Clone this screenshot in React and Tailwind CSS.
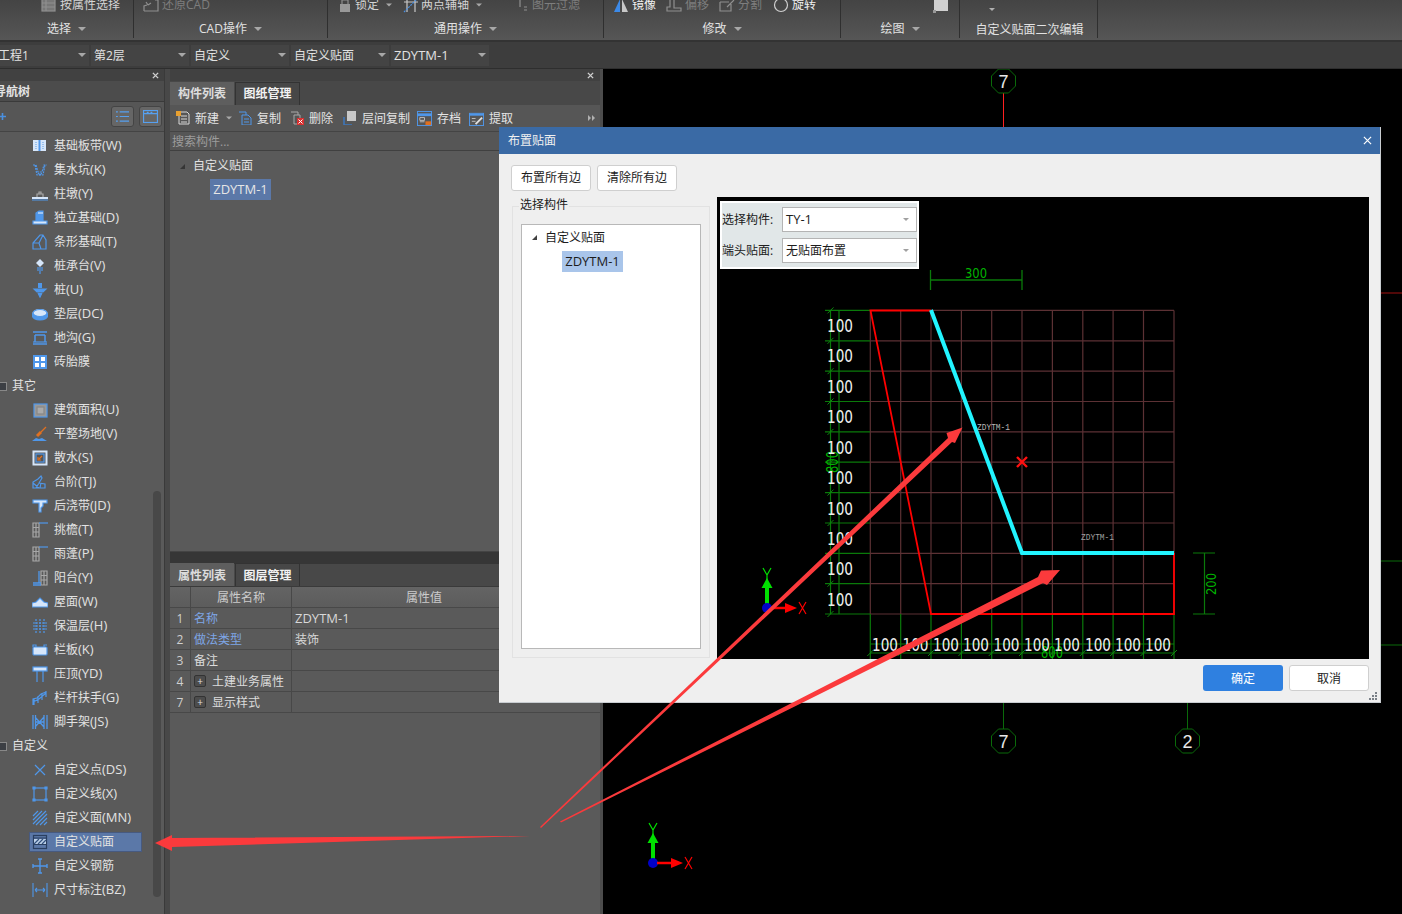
import React from "react";

const B = "#4f97ea";
const L = "#d6e6fa";
const G = "#a8a8a8";
const Svg = ({ children, className = "w-4 h-4" }) => (
  <svg viewBox="0 0 16 16" className={`${className} shrink-0`} fill="none" stroke={B} strokeWidth="1.2">{children}</svg>
);

const icons = {
  band: <><rect x="1" y="2" width="13" height="11" fill={L} stroke="none" /><path d="M7.500 2v11" stroke={B} strokeWidth="2" /><path d="M4 4v7M11 4v7" stroke="#6fa8e8" strokeDasharray="1 1" /></>,
  pit: <><path d="M1 3h3l2 7h4l2-7h3M3 3l2 10h6l2-10" strokeDasharray="2 1" /><path d="M6 11l2 2 2-2" /></>,
  pier: <><path d="M0 12h16" stroke={L} strokeWidth="2" /><path d="M0 14h16" strokeWidth="1" /><path d="M5 11V8h6v3M7 8V6h2v2" stroke={G} /></>,
  found: <><path d="M1 14h14v-3H1z" fill={L} /><path d="M4 11V3l3-2h4v10" fill={B} /><path d="M6 3h5" stroke={L} /></>,
  strip: <path d="M1 15V9l7-8h3l3 5v9zM1 9h6l2 6M7 9l4-8" />,
  cap: <><path d="M8 1l4 4-4 4-4-4z" fill={L} stroke="none" /><path d="M6 9v4M10 9v4M8 9v7" /></>,
  pile: <><rect x="6" y="1" width="4" height="5" fill={B} stroke="none" /><path d="M2 7h12l-3 3H5zM6 11l2 4 2-4" fill={B} /></>,
  cushion: <><ellipse cx="8" cy="7" rx="7.5" ry="4" fill={L} stroke="none" /><path d="M.5 7v3c0 2 3 4 7.5 4s7.5-2 7.5-4V7" fill={B} /><ellipse cx="8" cy="7" rx="7" ry="3.5" fill={L} /></>,
  trench: <><path d="M1 14h14M1 2h14M3 5h10M3 5v7M13 5v7" strokeWidth="1.5" /><path d="M1 12h14" /></>,
  brick: <><rect x="2" y="2" width="12" height="12" fill="#fff" stroke={B} strokeWidth="2" /><path d="M8 2v12M2 8h12" stroke={B} strokeWidth="2" /></>,
  area: <><rect x="2" y="2" width="13" height="13" fill="#999" stroke={B} /><rect x="5" y="5" width="7" height="7" fill="#aaa" stroke="#888" /></>,
  ground: <><path d="M0 15l4-3 3 1 3-1 5 3z" fill={B} stroke="none" /><path d="M5 10l4-4" stroke="#e07020" strokeWidth="3" /><path d="M9 6l5-5" stroke="#e07020" strokeWidth="1.3" /></>,
  apron: <><rect x="1.5" y="1.5" width="13" height="13" stroke={L} strokeWidth="2" /><rect x="4" y="4" width="8" height="8" fill="#555" stroke={B} /><path d="M10 6l-3 3M6 7v3h3" stroke="#e07020" /></>,
  stair: <path d="M1 14V8l5-3 3-3 1 2-3 5 6 1v4zM1 9l6 5M7 9l-3 5M9 9l-1 5" />,
  post: <path d="M1 2h14v3h-4v3l-2 2v4H7V5H1z" fill={L} stroke={B} />,
  eave: <><path d="M1 1h6v14H1zM1 5.5h6M1 10h6M4 1v14" stroke={G} /><path d="M7 1h9" /></>,
  balc: <><path d="M9 1h6v14H9zM9 5.5h6M9 10h6M12 1v14" stroke={G} /><path d="M1 13h8M1 15h8M7 1v12" strokeWidth="1.3" /></>,
  roof: <path d="M0 13V9l4-1 4-4 4 4 4 1v4z" fill={L} stroke={B} />,
  insul: <path d="M4 1v14M12 1v14M8 1v14M1 5h14M1 8h14M1 11h14" strokeDasharray="2 1" />,
  rail: <><rect x="1" y="5" width="14" height="8" rx="1" fill={L} stroke={B} /><path d="M1 5V3h3v2M12 5V3h3" /></>,
  cope: <><rect x="1" y="1" width="14" height="4" fill={L} stroke={B} /><path d="M5 5v11M11 5v11" /></>,
  hand: <path d="M1 15V9l4-1 4-4 5-2M2 9v6M6 6v7M10 3v7M14 1v6M1 12l6-3 7-6" />,
  scaf: <path d="M1 1v14M3.5 1v14M12 1v14M15 1v14M3 3l9 10M3 13l9-10M3 8h9" strokeWidth="1.3" />,
  dot: <path d="M3 3l10 10M13 3L3 13" />,
  line: <><rect x="2" y="2" width="12" height="12" /><path d="M1 1h2v2H1zM13 1h2v2h-2zM1 13h2v2H1zM13 13h2v2h-2z" fill={B} /></>,
  face: <path d="M1 6l5-5M1 10l9-9M1 14L14 1M4 15L15 4M8 15l7-7M12 15l3-3" />,
  tile: <><rect x="1.5" y="1.5" width="13" height="13" stroke="#2a3f60" /><rect x="2" y="5" width="12" height="5" fill="#bcd0e8" stroke="none" /><path d="M2 10l5-5M6 10l5-5M10 10l4-4" stroke="#33527f" /><path d="M1.5 4h13M1.5 10.500h13" stroke="#2a3f60" /></>,
  rebar: <path d="M8 1v14M1 8h14M1 6v4M15 6v4M6 1h4M6 15h4" strokeWidth="1.4" />,
  dim: <path d="M1 1v14M15 1v14M3 8h10M3 8l2-2M3 8l2 2M13 8l-2-2M13 8l-2 2" strokeWidth="1.1" stroke={B} />,
};

const navRows = [
  ["基础板带", "(W)", "band"], ["集水坑", "(K)", "pit"], ["柱墩", "(Y)", "pier"], ["独立基础", "(D)", "found"],
  ["条形基础", "(T)", "strip"], ["桩承台", "(V)", "cap"], ["桩", "(U)", "pile"], ["垫层", "(DC)", "cushion"],
  ["地沟", "(G)", "trench"], ["砖胎膜", "", "brick"], ["其它", "", null],
  ["建筑面积", "(U)", "area"], ["平整场地", "(V)", "ground"], ["散水", "(S)", "apron"], ["台阶", "(TJ)", "stair"],
  ["后浇带", "(JD)", "post"], ["挑檐", "(T)", "eave"], ["雨蓬", "(P)", "eave"], ["阳台", "(Y)", "balc"],
  ["屋面", "(W)", "roof"], ["保温层", "(H)", "insul"], ["栏板", "(K)", "rail"], ["压顶", "(YD)", "cope"],
  ["栏杆扶手", "(G)", "hand"], ["脚手架", "(JS)", "scaf"], ["自定义", "", null],
  ["自定义点", "(DS)", "dot"], ["自定义线", "(X)", "line"], ["自定义面", "(MN)", "face"],
  ["自定义贴面", "", "tile", true], ["自定义钢筋", "", "rebar"], ["尺寸标注", "(BZ)", "dim"],
];

const Caret = ({ className = "" }) => (
  <span className={`inline-block w-0 h-0 border-x-[4px] border-x-transparent border-t-[4px] border-t-[#a8a8a8] ${className}`} />
);

const RibbonGroup = ({ w, label, caret = true, children, labelClass = "" }) => (
  <div className={`${w} h-[38px] shrink-0 border-r border-[#2f2f2f] overflow-hidden flex flex-col`}>
    <div className="h-[16px] -mt-[3px] relative flex items-center whitespace-nowrap">{children}</div>
    <div className={`h-[16px] mt-[8px] flex items-center justify-center gap-[7px] text-[12px] text-[#e2e2e2] ${labelClass}`}>
      {label}{caret && <Caret />}
    </div>
  </div>
);

const RI = ({ ml, children }) => (
  <svg viewBox="0 0 16 16" className={`w-[16px] h-[16px] shrink-0 ${ml}`} fill="none" stroke="#8f8f8f" strokeWidth="1.2">{children}</svg>
);

const Select = ({ w, text, first, latin }) => (
  <div className={`${w} h-[21px] bg-[#444444] flex items-center justify-between pr-[3px] ${first ? "" : "pl-[3px]"} overflow-hidden`}>
    <span className={`pt-[2px] ${latin ? "text-[13px]" : "text-[12px]"} text-[#e2e2e2] whitespace-nowrap ${first ? "-ml-[2px]" : ""}`}>{text}</span>
    <Caret />
  </div>
);

const StripClose = ({ pr }) => (
  <div className={`h-[12px] bg-[#414141] flex items-center justify-end ${pr}`}>
    <svg viewBox="0 0 8 8" className="w-[7px] h-[7px]" stroke="#d0d0d0" strokeWidth="1.6"><path d="M1 1l6 6M7 1L1 7" /></svg>
  </div>
);

const Tab = ({ active, w, low, children }) => (
  <div className={`${w} h-[23px] flex items-center justify-center text-[12px] font-bold ${low ? (active ? "pt-[2px]" : "pt-[1px]") : ""} ${active ? "bg-[#5e5e5e] text-[#dcdcdc]" : "bg-[#474747] text-[#f2f2f2] border-x border-t border-[#333333]"}`}>
    {children}
  </div>
);

const Tb = ({ icon, label, ml, caret }) => (
  <div className={`flex items-center ${ml} shrink-0`}>
    {icon}
    <span className="ml-[5px] pt-[2px] text-[12px] text-[#e4e4e4]">{label}</span>
    {caret && <Caret className="ml-[6px] scale-75" />}
  </div>
);

const PropRow = ({ n, name, value, blue, plus, latin }) => (
  <div className="h-[21px] flex border-b border-[#484848] text-[12px]">
    <div className="w-[21px] shrink-0 border-r border-[#484848] flex items-center justify-center pt-[2px] text-[#d0d0d0]">{n}</div>
    <div className={`w-[101px] shrink-0 border-r border-[#484848] flex items-center pl-[3px] whitespace-nowrap ${blue ? "text-[#7ea6e6]" : "text-[#dcdcdc]"}`}>
      {plus && (
        <span className="w-[12px] h-[12px] mr-[6px] rounded-[2px] border border-[#333333] bg-[#4c4c4c] text-[#e0e0e0] flex items-center justify-center text-[10px] leading-none">+</span>
      )}
      <span className="pt-[2px]">{name}</span>
    </div>
    <div className={`flex-1 flex items-center pl-[3px] pt-[2px] text-[#d8d8d8] ${latin ? "text-[13px]" : ""}`}>{value}</div>
  </div>
);

const gx = [870.3, 900.7, 931, 961.4, 991.7, 1022, 1052.4, 1082.8, 1113.1, 1143.5, 1174];
const gy = [310.4, 340.8, 371.2, 401.5, 431.9, 462.2, 492.6, 523, 553.3, 583.7, 614];

const Num = ({ x, y, children }) => (
  <text x={x} y={y} fill="#f0f0f0" fontSize="17" fontFamily="DejaVu Sans" textLength="26" lengthAdjust="spacingAndGlyphs">{children}</text>
);

const Axis = ({ x, y }) => (
  <g>
    <path d={`M${x} ${y - 4}v-18`} stroke="#00e000" strokeWidth="4" />
    <path d={`M${x - 5.500} ${y - 20}L${x} ${y - 30}L${x + 5.500} ${y - 20}z`} fill="#00e000" />
    <circle cx={x} cy={y} r="5" fill="#0000c8" />
    <path d={`M${x + 4} ${y}h16`} stroke="#ff0000" strokeWidth="2.500" />
    <path d={`M${x + 18} ${y - 5}L${x + 30} ${y}L${x + 18} ${y + 5}z`} fill="#ff0000" />
    <path d={`M${x - 4} ${y - 40}L${x} ${y - 33}L${x + 4} ${y - 40}M${x} ${y - 33}v6`} stroke="#00e000" strokeWidth="1.200" fill="none" />
    <path d={`M${x + 32} ${y - 6}l7 12M${x + 39} ${y - 6}l-7 12`} stroke="#ff0000" strokeWidth="1.200" fill="none" />
  </g>
);

const Octa = ({ x, y, t }) => (
  <g>
    <path d={`M${x - 5} ${y - 12}h10l7 7v10l-7 7h-10l-7-7v-10z`} fill="none" stroke="#0a6a0a" strokeWidth="1" />
    <text x={x} y={y + 7} textAnchor="middle" fill="#e8e8e8" fontSize="18" fontFamily="Liberation Sans">{t}</text>
  </g>
);

function Canvas() {
  return (
    <svg viewBox="603 69 799 845" className="w-full h-full block">
      <path d="M1003.500 93v40" stroke="#ff2020" strokeWidth="1" />
      <path d="M1003.500 700v29M1187.500 700v29" stroke="#0a6a0a" strokeWidth="1" />
      <path d="M1378 293h24" stroke="#a01010" strokeWidth="1" />
      <path d="M1378 561h24M1378 645h24" stroke="#0a6a0a" strokeWidth="1" />
      <Octa x={1003.500} y={81} t="7" />
      <Octa x={1003.500} y={741} t="7" />
      <Octa x={1187.500} y={741} t="2" />
      <Axis x={653} y={863} />
    </svg>
  );
}

function Drawing() {
  const ticks = (x, y, key) => <path key={key} d={`M${x - 3} ${y + 3}l6-6`} stroke="#0d8a0d" strokeWidth="1" />;
  return (
    <svg viewBox="717 197 652 462" className="w-full h-full block">
      {gx.map((x) => <path key={x} d={`M${x} 310.400V614`} stroke="#5c3134" strokeWidth="1.200" />)}
      {gy.map((y) => <path key={y} d={`M870.300 ${y}H1174`} stroke="#5c3134" strokeWidth="1.200" />)}
      <path d="M830.500 310V614M839 310V614" stroke="#0a7a0a" strokeWidth="1.200" />
      <path d="M825 310.400H870M825 340.800H870M825 371.200H870M825 401.500H870M825 431.900H870M825 462.200H870M825 492.600H870M825 523H870M825 553.300H870M825 583.700H870M825 614H870" stroke="#0a7a0a" strokeWidth="1.200" />
      {gy.map((y, i) => ticks(830.5, y, "l" + i))}
      <path d="M870 644H1174M870 653H1174" stroke="#0a7a0a" strokeWidth="1.200" />
      {gx.map((x) => <path key={x} d={`M${x} 614V659`} stroke="#0a7a0a" strokeWidth="1.200" />)}
      {gx.map((x, i) => ticks(x, 653, "b" + i))}
      <text x={1052} y={658} textAnchor="middle" fill="#00b400" fontSize="15" fontFamily="DejaVu Sans" textLength="22" lengthAdjust="spacingAndGlyphs">800</text>
      <text transform="translate(838 462) rotate(-90)" textAnchor="middle" fill="#00b400" fontSize="15" fontFamily="DejaVu Sans" textLength="22" lengthAdjust="spacingAndGlyphs">800</text>
      {[332, 362, 393, 423, 454, 484, 515, 545, 575, 606].map((y) => <Num key={y} x={827} y={y}>100</Num>)}
      {[885, 915.500, 946, 976, 1006.500, 1037, 1067, 1098, 1128, 1158].map((x) => <Num key={x} x={x - 13} y={651}>100</Num>)}
      <path d="M930.500 280H1022M930.500 270V290M1022 270V290" stroke="#0a7a0a" strokeWidth="1.300" />
      <text x={976} y={278} textAnchor="middle" fill="#00b400" fontSize="14" fontFamily="DejaVu Sans" textLength="22" lengthAdjust="spacingAndGlyphs">300</text>
      <path d="M1204.500 553V614M1193 553H1215M1193 614H1215" stroke="#0a7a0a" strokeWidth="1.200" />
      <text transform="translate(1216 584) rotate(-90)" textAnchor="middle" fill="#00b400" fontSize="14" fontFamily="DejaVu Sans" textLength="22" lengthAdjust="spacingAndGlyphs">200</text>
      <path d="M931 310.500H870.500L931 614H1174V553" fill="none" stroke="#ff0000" strokeWidth="1.800" />
      <path d="M931 310L1022 553H1174" fill="none" stroke="#22f4ff" strokeWidth="4" />
      <path d="M1017 457l10 10M1027 457l-10 10" stroke="#ff1010" strokeWidth="2.400" />
      <text x={977} y={430} fill="#b8b8b8" fontSize="9" fontFamily="Liberation Mono" textLength="33" lengthAdjust="spacingAndGlyphs">ZDYTM-1</text>
      <text x={1081} y={540} fill="#a0a0a0" fontSize="9" fontFamily="Liberation Mono" textLength="33" lengthAdjust="spacingAndGlyphs">ZDYTM-1</text>
      <Axis x={767} y={608} />
    </svg>
  );
}

const FieldSel = ({ label, value, mt, latin }) => (
  <div className={`flex items-center ${mt}`}>
    <span className="w-[60px] text-[12px] text-[#202020] whitespace-nowrap">{label}</span>
    <div className={`w-[135px] h-[25px] bg-white border border-[#b4b4b4] flex items-center justify-between pl-[3px] pr-[7px] ${latin ? "text-[13px]" : "text-[12px]"} text-[#1c1c1c]`}>
      {value}
      <span className="w-0 h-0 border-x-[3px] border-x-transparent border-t-[3px] border-t-[#a0a0a0]" />
    </div>
  </div>
);

const DlgBtn = ({ children, primary, low }) => (
  <div className={`w-[80px] h-[26px] rounded-[3px] flex items-center justify-center text-[12px] ${low ? "pt-[2px]" : ""} ${primary ? "bg-[#2f80e0] text-white" : "bg-white border border-[#cfcfcf] text-[#1c1c1c]"}`}>
    {children}
  </div>
);

function Dialog() {
  return (
    <div className="absolute left-[499px] top-[127px] w-[882px] h-[576px] bg-[#efefef] border-b border-r border-[#c8ccd0] flex flex-col">
      <div className="h-[27px] bg-[#3a6aa5] flex items-center justify-between pl-[9px] pr-[8px] shrink-0">
        <span className="text-[12px] text-[#f0f0f0]">布置贴面</span>
        <svg viewBox="0 0 10 10" className="w-[9px] h-[9px]" stroke="#ffffff" strokeWidth="1.300"><path d="M1 1l8 8M9 1L1 9" /></svg>
      </div>
      <div className="flex gap-[6px] pl-[12px] pt-[11px] shrink-0">
        <DlgBtn>布置所有边</DlgBtn>
        <DlgBtn>清除所有边</DlgBtn>
      </div>
      <div className="flex pl-[13px] mt-[6px] shrink-0">
        <div className="relative w-[198px] h-[462px] pt-[9px] pb-[1px] shrink-0">
          <div className="w-full h-full border border-[#e2e2e2] pl-[8px] pr-[8px] pt-[17px] pb-[8px]">
            <div className="w-[180px] h-full bg-white border border-[#b8b8b8] pt-[2px]">
              <div className="flex items-center h-[21px] text-[12px] text-[#1c1c1c] pl-[10px]">
                <span className="w-0 h-0 border-l-[5px] border-l-transparent border-b-[5px] border-b-[#404040] mr-[8px]" />
                自定义贴面
              </div>
              <div className="ml-[40px] mt-[3px] w-[61px] h-[21px] bg-[#a9c5ea] flex items-center justify-center text-[13px] text-[#1c1c1c]">ZDYTM-1</div>
            </div>
          </div>
          <span className="absolute left-[7px] top-0 bg-[#efefef] px-[1px] text-[12px] leading-[16px] text-[#1c1c1c]">选择构件</span>
        </div>
        <div className="relative ml-[7px] w-[652px] h-[462px] bg-black shrink-0">
          <Drawing />
          <div className="absolute left-[3px] top-[4px] w-[199px] h-[68px] bg-[#e1e7e8] border-2 border-white pt-[4px]">
            <FieldSel label="选择构件:" value="TY-1" latin />
            <FieldSel label="端头贴面:" value="无贴面布置" mt="mt-[6px]" />
          </div>
        </div>
      </div>
      <div className="flex justify-end gap-[6px] pr-[11px] mt-[6px] shrink-0">
        <DlgBtn primary low>确定</DlgBtn>
        <DlgBtn low>取消</DlgBtn>
      </div>
      <svg viewBox="0 0 8 8" className="absolute right-[3px] bottom-[2px] w-[8px] h-[8px]" fill="#7a8088"><path d="M6 0h2v2H6zM3 3h2v2H3zM6 3h2v2H6zM0 6h2v2H0zM3 6h2v2H3zM6 6h2v2H6z" /></svg>
    </div>
  );
}

export default function App() {
  return (
    <div className="relative w-[1402px] h-[914px] overflow-hidden bg-[#3d3d3d] flex flex-col" style={{ fontFamily: '"Open Sans", "Noto Sans CJK SC", sans-serif' }}>
      {/* ribbon */}
      <div className="h-[42px] shrink-0 bg-gradient-to-b from-[#444444] to-[#565656] border-b-2 border-[#333333] flex">
        <RibbonGroup w="w-[134px]" label="选择">
          <RI ml="ml-[41px]"><rect x="1" y="2" width="13" height="12" fill="#777" /><path d="M1 6h13M1 10h13M5 2v12" /></RI>
          <span className="ml-[3px] text-[12px] text-[#d4d4d4]">按属性选择</span>
        </RibbonGroup>
        <RibbonGroup w="w-[194px]" label="CAD操作">
          <RI ml="ml-[9px]"><path d="M1 14V9l3-1M12 3h3v11H1M5 8L3 5M5 8l3-2" /></RI>
          <span className="ml-[3px] text-[12px] text-[#7e7e7e]">还原CAD</span>
        </RibbonGroup>
        <RibbonGroup w="w-[276px]" label="通用操作">
          <RI ml="ml-[9px]"><rect x="3" y="7" width="10" height="8" fill="#999" stroke="none" /><path d="M5 7V3h6v4" /></RI>
          <span className="ml-[2px] text-[12px] text-[#d4d4d4]">锁定</span>
          <Caret className="ml-[6px] scale-75" />
          <svg viewBox="0 0 16 16" className="w-[16px] h-[16px] ml-[10px]" fill="none" stroke="#c8c8c8" strokeWidth="1.200"><path d="M1 5h14M4 1v14M12 1v14" /><path d="M1 15l14-14" stroke="#4a90e0" strokeDasharray="2 1" /></svg>
          <span className="ml-[2px] text-[12px] text-[#d4d4d4]">两点辅轴</span>
          <Caret className="ml-[6px] scale-75" />
          <RI ml="ml-[32px]"><path d="M5 2v8M3 2h4" /><path d="M9 10h3M9 13h3" /></RI>
          <span className="ml-[1px] text-[12px] text-[#7e7e7e]">图元过滤</span>
        </RibbonGroup>
        <RibbonGroup w="w-[237px]" label="修改">
          <svg viewBox="0 0 16 16" className="w-[16px] h-[16px] ml-[9px] shrink-0"><path d="M7 2v13H1z" fill="#3c8ae8" /><path d="M9 2v13h6z" fill="#c8c8c8" /></svg>
          <span className="ml-[3px] text-[12px] text-[#f0f0f0]">镜像</span>
          <RI ml="ml-[10px]"><path d="M1 14h14v-3H8V2H4v8H1z" /></RI>
          <span className="ml-[3px] text-[12px] text-[#7e7e7e]">偏移</span>
          <RI ml="ml-[10px]"><path d="M1 5h9M1 5v9h11v-7M8 10l7-7" /></RI>
          <span className="ml-[3px] text-[12px] text-[#7e7e7e]">分割</span>
          <svg viewBox="0 0 16 16" className="w-[16px] h-[16px] ml-[11px] shrink-0" fill="none" stroke="#d0d0d0" strokeWidth="1.200"><circle cx="8" cy="8" r="6.500" /></svg>
          <span className="ml-[3px] text-[12px] text-[#f0f0f0]">旋转</span>
        </RibbonGroup>
        <RibbonGroup w="w-[119px]" label="绘图">
          <svg viewBox="0 0 16 16" className="w-[16px] h-[16px] ml-[92px] shrink-0"><rect x="1" y="0" width="14" height="14" fill="#d0d0d0" /><path d="M0 13h3v3H0z" fill="#999" /></svg>
        </RibbonGroup>
        <RibbonGroup w="w-[138px]" label="自定义贴面二次编辑" caret={false} labelClass="mt-[9px] pl-[2px]">
          <span className="ml-[29px] mt-[8px] w-0 h-0 border-x-[3px] border-x-transparent border-t-[3px] border-t-[#b0b0b0]" />
        </RibbonGroup>
      </div>
      {/* selector bar */}
      <div className="h-[27px] shrink-0 border-b border-[#2e2e2e] flex items-center gap-[2px]">
        <Select w="w-[89px]" text="工程1" first />
        <Select w="w-[98px]" text="第2层" />
        <Select w="w-[98px]" text="自定义" />
        <Select w="w-[98px]" text="自定义贴面" />
        <Select w="w-[98px]" text="ZDYTM-1" latin />
      </div>
      {/* main */}
      <div className="flex-1 flex min-h-0">
        {/* navigation tree */}
        <div className="w-[165px] shrink-0 bg-[#5a5a5a] border-r border-[#3a3a3a] flex flex-col overflow-hidden">
          <StripClose pr="pr-[5px]" />
          <div className="h-[21px] bg-[#4c4c4c] border-b border-[#3a3a3a] flex items-center pt-[2px] text-[12px] font-bold text-[#e4e4e4]">
            <span className="-ml-[6px]">导航树</span>
          </div>
          <div className="h-[30px] bg-[#565656] border-b border-[#444444] flex items-center relative">
            <svg viewBox="0 0 8 8" className="w-[7px] h-[7px] -ml-[1px]" stroke="#4a90e0" strokeWidth="1.800"><path d="M4 0v8M0 4h8" /></svg>
            <div className="ml-[105px] w-[23px] h-[21px] rounded-[3px] bg-[#666666] border border-[#444444] flex items-center justify-center">
              <svg viewBox="0 0 14 14" className="w-[13px] h-[13px]" stroke="#56a0f0" strokeWidth="1.300" fill="none"><path d="M0 2h2M4 2h10M0 7h2M4 7h10M0 12h2M4 12h10" /></svg>
            </div>
            <div className="ml-[5px] w-[23px] h-[21px] rounded-[3px] bg-[#666666] border border-[#444444] flex items-center justify-center">
              <svg viewBox="0 0 16 14" className="w-[15px] h-[13px]" stroke="#56a0f0" strokeWidth="1.300" fill="none"><rect x="0.500" y="0.500" width="15" height="13" /><path d="M0 4h16M4 2.500h2M8 2.500h2" /></svg>
            </div>
          </div>
          <div className="relative flex-1 pt-[2px]">
            {navRows.map(([t, latin, ic, sel]) =>
              ic ? (
                <div key={t + ic} className="h-[24px] flex items-center">
                  <div className={`ml-[29px] w-[113px] h-[20px] flex items-center pl-[2px] gap-[6px] border ${sel ? "bg-[#5b78a8] border-[#475a80]" : "border-transparent"}`}>
                    <Svg>{icons[ic]}</Svg>
                    <span className="text-[12px] text-[#e2e2e2] whitespace-nowrap">{t}<span className="text-[13px]">{latin}</span></span>
                  </div>
                </div>
              ) : (
                <div key={t} className="h-[24px] flex items-center pl-0">
                  <span className="block w-[7px] h-[9px] bg-[#3c3f44] border-y border-r border-[#888888]" />
                  <span className="ml-[5px] text-[12px] text-[#e2e2e2]">{t}</span>
                </div>
              )
            )}
            <div className="absolute right-[3px] top-[359px] w-[8px] h-[406px] rounded-[4px] bg-[#484848]" />
          </div>
        </div>
        <div className="w-[5px] shrink-0 bg-[#484848]" />
        {/* middle panels */}
        <div className="w-[430px] shrink-0 flex flex-col overflow-hidden">
          <StripClose pr="pr-[6px]" />
          <div className="h-[24px] bg-[#484848] flex items-end gap-[1px]">
            <Tab active w="w-[64px]">构件列表</Tab>
            <Tab w="w-[65px]">图纸管理</Tab>
          </div>
          <div className="h-[27px] bg-[#565656] border-b border-[#444444] flex items-center pl-[6px] relative">
            <Tb ml="" caret label="新建" icon={<svg viewBox="0 0 14 14" className="w-[14px] h-[14px]" fill="none" stroke="#d8d8d8"><path d="M3 1h8l2 2v10H3zM5 5h6M5 8h6M5 11h6" /><rect x="0" y="0" width="5" height="5" fill="#e8a030" stroke="none" /></svg>} />
            <Tb ml="ml-[5px]" label="复制" icon={<svg viewBox="0 0 14 14" className="w-[14px] h-[14px]" fill="none" stroke="#4f97ea"><path d="M1 1h7v3M4 4h6l3 3v7H4zM6 8h5M6 11h5" /></svg>} />
            <Tb ml="ml-[9px]" label="删除" icon={<svg viewBox="0 0 14 14" className="w-[14px] h-[14px]" fill="none" stroke="#a8a8a8"><path d="M1 1h7v3M4 4h6v3M4 4v9h3" /><rect x="7" y="7" width="7" height="7" fill="#d83030" stroke="none" /><path d="M8.500 8.500l4 4M12.500 8.500l-4 4" stroke="#fff" /></svg>} />
            <Tb ml="ml-[10px]" label="层间复制" icon={<svg viewBox="0 0 14 14" className="w-[14px] h-[14px]"><rect x="4" y="0" width="9" height="10" fill="#c8c8c8" /><path d="M1 6v8h8" fill="none" stroke="#3c78c0" strokeWidth="1.500" /></svg>} />
            <Tb ml="ml-[7px]" label="存档" icon={<svg viewBox="0 0 16 16" className="w-[15px] h-[15px]" fill="none" stroke="#4f97ea"><rect x="0.500" y="0.500" width="15" height="15" /><path d="M0 4h16" strokeWidth="3" /><path d="M3 7h5v3H3zM3 11.500h5" stroke="#c0c0c0" /><rect x="9" y="11" width="6" height="4" fill="#e07020" stroke="none" /></svg>} />
            <Tb ml="ml-[8px]" label="提取" icon={<svg viewBox="0 0 16 16" className="w-[15px] h-[15px]" fill="none" stroke="#4f97ea"><rect x="0.500" y="2.500" width="15" height="13" /><path d="M0 4h16" strokeWidth="2" /><path d="M3 8h4M3 11h4" stroke="#c0c0c0" /><path d="M7 14l7-7" stroke="#e0e0e0" strokeWidth="2" /></svg>} />
            <span className="absolute right-[5px] top-[10px] flex">
              <span className="w-0 h-0 border-y-[3px] border-y-transparent border-l-[3px] border-l-[#b0b0b0]" />
              <span className="w-0 h-0 ml-[1px] border-y-[3px] border-y-transparent border-l-[3px] border-l-[#b0b0b0]" />
            </span>
          </div>
          <div className="h-[19px] bg-[#565656] border-b border-[#404040] flex items-center pl-[2px] pt-[2px] text-[12px] text-[#9c9c9c]">搜索构件...</div>
          <div className="h-[401px] bg-[#5a5a5a] border-b border-[#444444] pt-[3px]">
            <div className="h-[24px] flex items-center pl-[10px] text-[12px] text-[#e2e2e2]">
              <span className="w-0 h-0 border-l-[5px] border-l-transparent border-b-[5px] border-b-[#353535] mr-[8px]" />
              自定义贴面
            </div>
            <div className="ml-[40px] mt-[1px] w-[61px] h-[21px] bg-[#5b78a8] flex items-center justify-center text-[13px] text-[#e6e6e6]">ZDYTM-1</div>
          </div>
          <div className="h-[12px] bg-[#363636] shrink-0" />
          <div className="h-[23px] bg-[#484848] border-b border-[#3a3a3a] flex items-end gap-[1px] shrink-0">
            <Tab active low w="w-[64px]">属性列表</Tab>
            <Tab low w="w-[65px]">图层管理</Tab>
          </div>
          <div className="flex-1 bg-[#5a5a5a]">
            <div className="h-[21px] flex border-b border-[#484848] text-[12px] text-[#cccccc] bg-gradient-to-b from-[#646464] to-[#5c5c5c]">
              <div className="w-[21px] border-r border-[#484848]" />
              <div className="w-[101px] border-r border-[#484848] flex items-center justify-center pt-[2px]">属性名称</div>
              <div className="flex-1 flex items-center pl-[114px] pt-[2px]">属性值</div>
            </div>
            <PropRow n="1" name="名称" value="ZDYTM-1" blue latin />
            <PropRow n="2" name="做法类型" value="装饰" blue />
            <PropRow n="3" name="备注" value="" />
            <PropRow n="4" name="土建业务属性" value="" plus />
            <PropRow n="7" name="显示样式" value="" plus />
          </div>
        </div>
        <div className="w-[3px] shrink-0 bg-[#4c4c4c]" />
        {/* canvas */}
        <div className="flex-1 bg-black"><Canvas /></div>
      </div>
      <Dialog />
      {/* hand-drawn annotation arrows */}
      <svg viewBox="0 0 1402 914" className="absolute inset-0 w-[1402px] h-[914px] pointer-events-none" fill="#fb3a3c">
        <polygon points="540,827 948,438 946.500,433 962.500,427.500 955,443 952,442 541,828" />
        <polygon points="560,821.500 1038,577 1041,570.500 1060,570 1047,585 1043,583 561,822.500" />
        <polygon points="530,836 172,838 172,835 155,843 172,851 172,847" />
      </svg>
    </div>
  );
}
